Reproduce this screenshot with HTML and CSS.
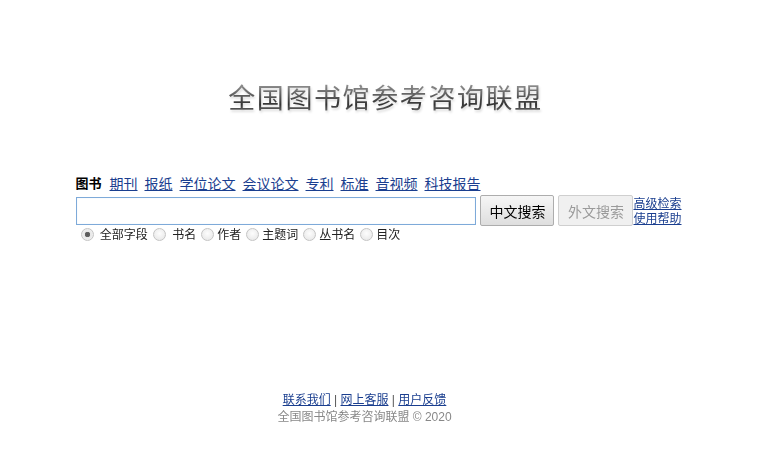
FILE: index.html
```html
<!DOCTYPE html>
<html lang="zh-CN">
  <head>
    <meta charset="UTF-8" />
    <title>全国图书馆参考咨询联盟</title>
    <link rel="stylesheet" href="styles.css">
  </head>
  <body>
    <header>
      <h1 class="logo">全国图书馆参考咨询联盟</h1>
    </header>
    <main>
      <form class="search">
        <div class="tabs">
          <span class="current">图书</span>
          <a href="#">期刊</a>
          <a href="#">报纸</a>
          <a href="#">学位论文</a>
          <a href="#">会议论文</a>
          <a href="#">专利</a>
          <a href="#">标准</a>
          <a href="#">音视频</a>
          <a href="#">科技报告</a>
        </div>
        <div class="row">
          <input type="text" class="keyword" autofocus>
          <button type="button" class="btn">中文搜索</button>
          <button type="button" class="btn" disabled>外文搜索</button>
          <div class="more">
            <a href="#">高级检索</a>
            <a href="#">使用帮助</a>
          </div>
        </div>
        <div class="fields">
          <label><input type="radio" name="field" checked> 全部字段</label>
          <label><input type="radio" name="field"> 书名</label>
          <label><input type="radio" name="field">作者</label>
          <label><input type="radio" name="field">主题词</label>
          <label><input type="radio" name="field">丛书名</label>
          <label><input type="radio" name="field">目次</label>
        </div>
      </form>
    </main>
    <footer>
      <p class="links"><a href="#">联系我们</a> | <a href="#">网上客服</a> | <a href="#">用户反馈</a></p>
      <p class="copy">全国图书馆参考咨询联盟 © 2020</p>
    </footer>
  </body>
</html>
```

FILE: styles.css
```css
* {
  margin: 0;
  padding: 0;
  box-sizing: border-box;
}

body {
  font-family: "Liberation Sans", "Noto Sans CJK SC", sans-serif;
  font-size: 13px;
  color: #000;
  background-color: #fff;
}

a {
  color: #1a3e8f;
}

header {
  padding-top: 78px;
  text-align: center;
}

.logo {
  display: inline-block;
  margin-left: 10px;
  font-family: "Noto Sans CJK SC", sans-serif;
  font-size: 27px;
  font-weight: 400;
  letter-spacing: 1.6px;
  line-height: 38px;
  color: #555;
  background: linear-gradient(#b0b0b0, #555 50%, #333 70%, #8a8a8a);
  -webkit-background-clip: text;
  background-clip: text;
  -webkit-text-fill-color: transparent;
  filter: drop-shadow(1px 2px 1px rgba(0, 0, 0, 0.14));
}

.search {
  width: 606px;
  margin: 58px 0 0 calc(50% - 305px);
}

.tabs {
  display: flex;
  gap: 7px;
  line-height: 20px;
  font-size: 14px;
}

.tabs .current {
  font-weight: 700;
  font-size: 13px;
  margin-right: 1px;
}

.row {
  display: flex;
  align-items: flex-start;
  margin-top: 1px;
}

.keyword {
  width: 401px;
  height: 28px;
  margin-top: 2px;
  border: 1px solid #7eaad9;
  box-shadow: inset 0 0 1px #c8dcf0;
  padding: 0 4px;
  font-size: 14px;
  outline: none;
}

.btn {
  width: 74px;
  height: 31px;
  margin-left: 4px;
  font-family: "Liberation Sans", "Noto Sans CJK SC", sans-serif;
  font-size: 14px;
  color: #000;
  background: linear-gradient(#f6f6f6, #dedede);
  border: 1px solid #adadad;
  border-radius: 2px;
}

.btn:disabled {
  width: 75px;
  color: #9a9a9a;
  background: #f0f0f0;
  border-color: #cfcfcf;
}

.more {
  display: flex;
  flex-direction: column;
  margin-top: 2px;
  line-height: 15px;
  font-size: 12px;
}

.fields {
  display: flex;
  font-size: 12px;
  line-height: 16px;
  color: #222;
}

.fields label {
  white-space: pre;
}

.fields input {
  appearance: none;
  -webkit-appearance: none;
  width: 13px;
  height: 13px;
  margin: 0 3px 0 5px;
  vertical-align: -2px;
  border: 1px solid #c4c4c4;
  border-radius: 50%;
  background: radial-gradient(circle at 50% 40%, #fdfdfd, #e4e4e4);
}

.fields input:checked {
  background: radial-gradient(circle, #555 0, #666 2.5px, #e8e8e8 3px, #f4f4f4);
}

footer {
  margin-top: 149px;
  text-align: center;
  font-size: 12px;
  line-height: 17px;
  padding-right: 32px;
}

footer .links {
  color: #555;
}

footer .copy {
  color: #888;
}
```
